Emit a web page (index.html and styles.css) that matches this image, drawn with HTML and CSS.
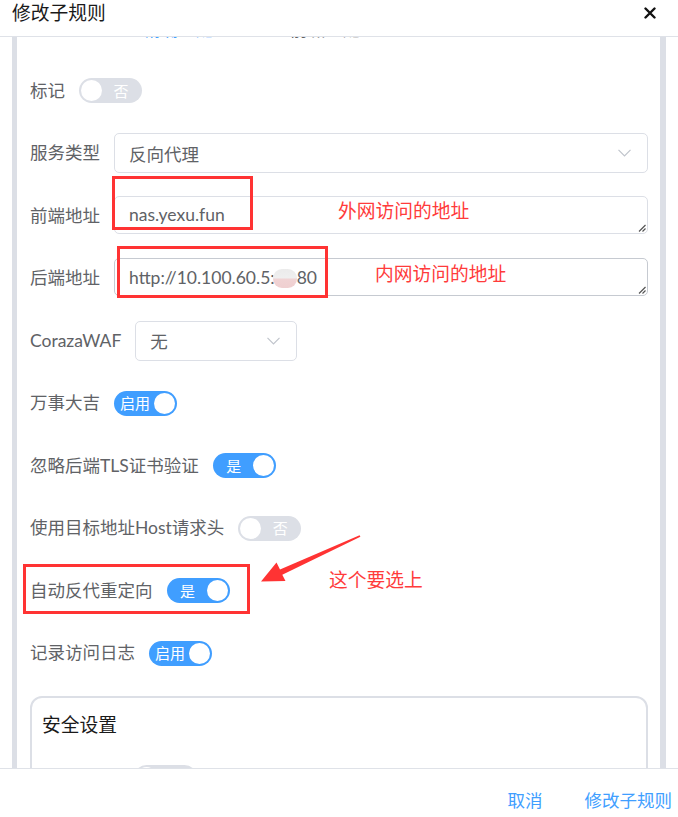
FILE: index.html
```html
<!DOCTYPE html>
<html>
<head>
  <title>修改子规则</title>
  <meta charset="UTF-8">
  <link rel="stylesheet" href="styles.css">
</head>
<body>
  <div class="dialog">
    <div class="dialog-header">
      <span class="dialog-title">修改子规则</span>
      <button class="dialog-close" aria-label="关闭">
        <svg width="12" height="12" viewBox="0 0 12 12"><path d="M1.5 1.5 L10.5 10.5 M10.5 1.5 L1.5 10.5" stroke="#111" stroke-width="2.4" stroke-linecap="round"/></svg>
      </button>
    </div>

    <div class="dialog-body">
      <div class="panel">
        <div class="form-item form-item-first">
          <label class="form-label">匹配方式<span class="tip">▾</span></label>
          <span class="radio radio-checked"></span>
          <span class="radio-text radio-text-checked">精确匹配<span class="tip">▾</span></span>
          <span class="radio"></span>
          <span class="radio-text">前缀匹配<span class="tip">▾</span></span>
        </div>

        <div class="form-item">
          <label class="form-label">标记</label>
          <span class="switch"><span class="switch-dot"></span><span class="switch-text">否</span></span>
        </div>

        <div class="form-item">
          <label class="form-label">服务类型</label>
          <div class="select select-wide">
            <span>反向代理</span>
            <svg class="chevron" width="13" height="8" viewBox="0 0 13 8"><path d="M0.5 0.8 L6.5 6.8 L12.5 0.8" fill="none" stroke="#c0c4cc" stroke-width="1.2"/></svg>
          </div>
        </div>

        <div class="form-item">
          <label class="form-label">前端地址</label>
          <div class="textarea">
            nas.yexu.fun
            <svg class="grip" width="8" height="8" viewBox="0 0 8 8"><path d="M7.5 1 L1 7.5 M7.5 4.5 L4.5 7.5" stroke="#555" stroke-width="1.2"/></svg>
          </div>
        </div>

        <div class="form-item">
          <label class="form-label">后端地址</label>
          <div class="textarea textarea-dark">
            <span>http://10.100.60.5:<span class="smudge"></span>80</span>
            <svg class="grip" width="8" height="8" viewBox="0 0 8 8"><path d="M7.5 1 L1 7.5 M7.5 4.5 L4.5 7.5" stroke="#555" stroke-width="1.2"/></svg>
          </div>
        </div>

        <div class="form-item">
          <label class="form-label">CorazaWAF</label>
          <div class="select select-small">
            <span>无</span>
            <svg class="chevron" width="13" height="8" viewBox="0 0 13 8"><path d="M0.5 0.8 L6.5 6.8 L12.5 0.8" fill="none" stroke="#c0c4cc" stroke-width="1.2"/></svg>
          </div>
        </div>

        <div class="form-item">
          <label class="form-label">万事大吉</label>
          <span class="switch switch-on"><span class="switch-text">启用</span><span class="switch-dot"></span></span>
        </div>

        <div class="form-item">
          <label class="form-label">忽略后端TLS证书验证</label>
          <span class="switch switch-on"><span class="switch-text">是</span><span class="switch-dot"></span></span>
        </div>

        <div class="form-item">
          <label class="form-label">使用目标地址Host请求头</label>
          <span class="switch"><span class="switch-dot"></span><span class="switch-text">否</span></span>
        </div>

        <div class="form-item">
          <label class="form-label">自动反代重定向</label>
          <span class="switch switch-on"><span class="switch-text">是</span><span class="switch-dot"></span></span>
        </div>

        <div class="form-item">
          <label class="form-label">记录访问日志</label>
          <span class="switch switch-on"><span class="switch-text">启用</span><span class="switch-dot"></span></span>
        </div>

        <div class="card">
          <div class="card-title">安全设置</div>
          <div class="form-item">
            <label class="form-label">防CC攻击</label>
            <span class="switch switch-small"><span class="switch-dot"></span><span class="switch-text">否</span></span>
          </div>
        </div>
      </div>
    </div>

    <div class="dialog-footer">
      <button class="text-button">取消</button>
      <button class="text-button">修改子规则</button>
    </div>

    <!-- red annotations drawn over the screenshot -->
    <svg class="annotations" width="678" height="817" viewBox="0 0 678 817">
      <rect x="113.5" y="177.5" width="138" height="51" fill="none" stroke="#f33" stroke-width="3"/>
      <rect x="118.5" y="247.5" width="208" height="49" fill="none" stroke="#f33" stroke-width="3"/>
      <rect x="24.5" y="565.5" width="224" height="47" fill="none" stroke="#f33" stroke-width="3"/>
      <polygon points="359.6,535.2 280,569.5 276.5,562.5 261,581.5 285.5,581 282.3,574.8 360.4,536.8" fill="#f33"/>
    </svg>
    <span class="note note-front">外网访问的地址</span>
    <span class="note note-back">内网访问的地址</span>
    <span class="note note-redirect">这个要选上</span>
  </div>
</body>
</html>
```

FILE: styles.css
```css
body {
  margin: 0;
  font-family: Lato, "Noto Sans CJK SC", "Microsoft YaHei", sans-serif;
  background-color: #ffffff;
}
.dialog {
  position: relative;
  width: 678px;
  height: 817px;
  display: flex;
  flex-direction: column;
  overflow: hidden;
}
.dialog-header {
  height: 34px;
  border-bottom: 1px solid #dfe2e8;
  display: flex;
  justify-content: space-between;
  align-items: flex-start;
  padding: 2px 22px 0 12px;
  box-sizing: content-box;
}
.dialog-title {
  font-size: 18.75px;
  line-height: 22px;
  color: #1a1a1a;
}
.dialog-close {
  background: none;
  border: none;
  padding: 0;
  margin-top: 5px;
  width: 12px;
  height: 12px;
  display: flex;
}
.dialog-body {
  flex: 1;
  overflow: hidden;
  padding: 0 12px;
}
.panel {
  min-height: 100%;
  border-left: 5px solid #dcdfe6;
  border-right: 6px solid #dcdfe6;
  padding: 0 12px 0 13px;
}
.form-item {
  height: 40px;
  margin-bottom: 22.5px;
  display: flex;
  align-items: center;
  gap: 14px;
}
.form-item-first {
  margin-top: -29px;
  gap: 10px;
}
.form-label {
  font-size: 17.5px;
  line-height: 24px;
  color: #606266;
  white-space: nowrap;
}
.tip {
  font-size: 10px;
  margin-left: 2px;
}
.radio {
  width: 12px;
  height: 12px;
  border-radius: 50%;
  border: 1px solid #dcdfe6;
  box-sizing: border-box;
  margin-left: 6px;
}
.radio-checked {
  background-color: #409eff;
  border-color: #409eff;
  margin-left: 0;
}
.radio-text {
  font-size: 17.5px;
  color: #606266;
  margin-right: 28px;
  margin-left: 4px;
}
.radio-text-checked {
  color: #409eff;
}
.switch {
  display: inline-flex;
  align-items: center;
  width: 63px;
  height: 25px;
  border-radius: 13px;
  background-color: #dcdfe6;
  padding: 0 2px;
  box-sizing: border-box;
}
.switch-on {
  background-color: #409eff;
}
.switch-dot {
  width: 21px;
  height: 21px;
  border-radius: 50%;
  background-color: #ffffff;
  flex-shrink: 0;
}
.switch-text {
  flex: 1;
  text-align: center;
  color: #ffffff;
  font-size: 15px;
  line-height: 20px;
}
.switch-small {
  margin-left: 2px;
}
.select {
  height: 40px;
  border: 1px solid #dcdfe6;
  border-radius: 5px;
  box-sizing: border-box;
  display: flex;
  align-items: center;
  justify-content: space-between;
  padding: 0 16px 0 14px;
  font-size: 17.5px;
  color: #606266;
}
.select-wide {
  flex: 1;
}
.select-small {
  width: 162px;
}
.textarea {
  position: relative;
  flex: 1;
  height: 38px;
  border: 1px solid #dcdfe6;
  border-radius: 5px;
  box-sizing: border-box;
  display: flex;
  align-items: center;
  padding: 0 14px;
  font-size: 17.5px;
  color: #606266;
  margin-top: -2px;
}
.textarea-dark {
  border-color: #c6cad1;
}
.grip {
  position: absolute;
  right: 1px;
  bottom: 1px;
}
.smudge {
  display: inline-block;
  width: 24px;
  height: 19px;
  margin-left: -2px;
  vertical-align: -4px;
  border-radius: 9px;
  background: linear-gradient(#ebebeb 0%, #efefef 45%, #f0d3d4 55%, #efcfd0 100%);
  filter: blur(0.6px);
}
.card {
  border: 2px solid #dcdfe6;
  border-radius: 12px;
  padding: 15px 10px 0;
  height: 120px;
}
.card-title {
  font-size: 18.75px;
  line-height: 24px;
  color: #1a1a1a;
  margin-bottom: 21px;
}
.dialog-footer {
  border-top: 1px solid #dfe2e8;
  display: flex;
  justify-content: flex-end;
  align-items: flex-start;
  gap: 42px;
  padding: 20px 6px 0 0;
  box-sizing: content-box;
  height: 28px;
}
.text-button {
  background: none;
  border: none;
  padding: 0;
  font-family: inherit;
  font-size: 17.5px;
  line-height: 24px;
  color: #409eff;
}
.annotations {
  position: absolute;
  top: 0;
  left: 0;
  pointer-events: none;
}
.note {
  position: absolute;
  font-size: 18.75px;
  line-height: 24px;
  color: #ff3b3b;
  white-space: nowrap;
}
.note-front {
  left: 338px;
  top: 199px;
}
.note-back {
  left: 375px;
  top: 262px;
}
.note-redirect {
  left: 329px;
  top: 568px;
}
```
